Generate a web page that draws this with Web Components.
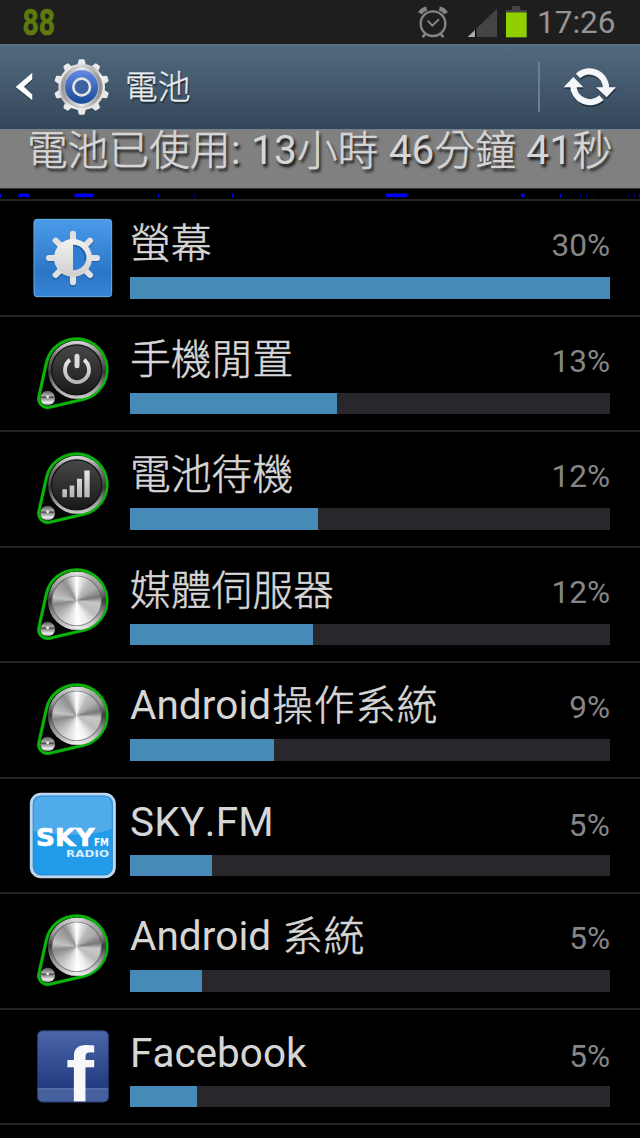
<!DOCTYPE html>
<html lang="zh-Hant">
<head>
<meta charset="utf-8">
<title>電池</title>
<style>
    body {
        margin: 0;
        width: 640px;
        height: 1138px;
        overflow: hidden;
        background: #000;
        color: #d6d6d6;
        font-family: Roboto, "Noto Sans CJK TC", sans-serif;
    }
</style>
</head>
<body>
<battery-screen></battery-screen>

<script>
const define = (name, html, setup) => {
    const template = document.createElement('template');
    template.innerHTML = html;
    customElements.define(name, class extends HTMLElement {
        constructor() {
            super();
            this.attachShadow({mode: 'open'}).append(template.content.cloneNode(true));
        }

        connectedCallback() {
            if (setup) setup(this, this.shadowRoot);
        }
    });
};

// Status bar
define('status-bar', `
<style>
    :host {
        display: flex;
        align-items: flex-start;
        height: 44px;
        background: #1e1e1e;
    }
    svg { display: block; }
    .icons { margin-left: auto; }
    .clock {
        width: 103px;
        box-sizing: border-box;
        font-size: 31.5px;
        line-height: 45px;
        color: #959595;
    }
</style>
<svg width="80" height="44">
    <text x="22.5" y="35.3" font-family="Roboto" font-weight="700" font-size="36.5" fill="#5f7a0c" stroke="#5f7a0c" stroke-width=".7" textLength="32.5" lengthAdjust="spacingAndGlyphs">88</text>
</svg>
<svg class="icons" width="137" height="44" viewBox="0 0 411 132">
    <g fill="none" stroke="#858585" stroke-width="7">
        <circle cx="99" cy="71" r="37"/>
        <path d="M83 62l14 15 20-19" stroke-width="6"/>
        <path d="M76 101l-8 11M122 101l8 11" stroke-width="8"/>
        <path d="M60 40Q66 29 80 26M138 40Q132 29 118 26" stroke-width="13"/>
    </g>
    <path d="M203 111L291 26V111z" fill="#444"/>
    <path d="M203 111L225 90V111z" fill="#aaa"/>
    <path d="M225 89l4-3v25h-4z" fill="#000"/>
    <path d="M336 18h25v12h19v7h-62v-7h18z" fill="#444"/>
    <path d="M318 37h62v75h-62z" fill="#90d000"/>
</svg>
<div class="clock"><slot></slot></div>
`);

// Title bar with back chevron, settings gear and refresh
define('action-bar', `
<style>
    :host {
        display: flex;
        height: 85px;
        border-top: 1px solid #5d7283;
        box-sizing: border-box;
        background: linear-gradient(#526a7f, #34475a);
    }
    svg { display: block; margin-top: -1px; }
    .title {
        flex: 1;
        padding: 3px 0 0 5px;
        font-size: 32.7px;
        font-weight: 300;
        -webkit-text-stroke: .4px;
        line-height: 80px;
        color: #e8ecef;
        text-shadow: 1px 2px 1px #1c2731;
    }
    .divider {
        width: 2px;
        margin: 17px 0;
        background: #6b7f8f;
    }
</style>
<svg width="120" height="84" viewBox="0 132 360 252">
    <defs>
        <linearGradient id="blue" x2="0" y2="1"><stop stop-color="#6289e4"/><stop offset="1" stop-color="#174a97"/></linearGradient>
        <linearGradient id="silver" x2="1" y2="1"><stop stop-color="#f7f7f7"/><stop offset=".25" stop-color="#dedede"/><stop offset=".42" stop-color="#b9b9b9"/><stop offset=".6" stop-color="#f2f2f2"/><stop offset="1" stop-color="#d8d8d8"/></linearGradient>
        <linearGradient id="rim" x2="1"><stop stop-color="#999"/><stop offset=".5" stop-color="#eee"/><stop offset="1" stop-color="#8c8c8c"/></linearGradient>
    </defs>
    <path d="M98 221v19L73 263l25 24v17L48 264z" fill="#1d2833"/>
    <path d="M97 218v20L72 260l25 24v17L47 261z" fill="#fff"/>
    <g id="teeth" fill="#e9e9e9"></g>
    <circle cx="245" cy="261" r="70" fill="url(#silver)"/>
    <circle cx="245" cy="261" r="57" fill="none" stroke="url(#rim)" stroke-width="12"/>
    <circle cx="245" cy="261" r="61" fill="none" stroke="#aaa" stroke-width="2"/>
    <circle cx="245" cy="261" r="50" fill="url(#blue)"/>
    <circle cx="245" cy="261" r="25" fill="#3c62a5" stroke="#e3e3e3" stroke-width="8"/>
</svg>
<div class="title"><slot></slot></div>
<div class="divider"></div>
<svg width="100" height="84" viewBox="420 132 300 252">
    <g transform="translate(2 5)" fill="#1f2b36" stroke="#1f2b36" opacity=".8">
        <path d="M534 228A50 50 0 0 1 618 268M604 293A50 50 0 0 1 520 256" fill="none" stroke-width="19"/>
        <path d="M588 262h60l-28 30zM491 262h59l-30-31z" stroke="none"/>
    </g>
    <path d="M534 228A50 50 0 0 1 618 268M604 293A50 50 0 0 1 520 256" fill="none" stroke="#f5f7fa" stroke-width="19"/>
    <path d="M588 262h60l-28 30zM491 262h59l-30-31z" fill="#f5f7fa"/>
</svg>
`, (host, root) => {
    let teeth = '';
    for (let i = 0; i < 10; i++) {
        teeth += `<path d="M231 200L236 180Q237 178 240 178h10Q253 178 254 180L259 200z" transform="rotate(${i * 36} 245 261)"/>`;
    }
    root.querySelector('#teeth').innerHTML = teeth;
});

define('usage-summary', `
<style>
    :host {
        display: block;
        height: 59px;
        box-sizing: border-box;
        border-top: 1px solid #6f7f8b;
        background: #808080;
        text-align: center;
        white-space: nowrap;
        font-size: 40.6px;
        letter-spacing: .17px;
        line-height: 40px;
        text-shadow: 2px 3px 3px #111;
    }
    ::slotted(span) { font-weight: 300; -webkit-text-stroke: .6px; vertical-align: -1px; line-height: 1; }
</style>
<slot></slot>
`);

// Thin strip of awake periods
define('awake-strip', `
<style>
    :host {
        display: block;
        height: 13px;
        box-sizing: border-box;
        border-top: 1px solid #333;
        border-bottom: 2px solid #242424;
    }
    svg { display: block; }
</style>
<svg width="640" height="10"><g id="marks"></g></svg>
`, (host, root) => {
    const marks = [
        [0, 1], [18.5, 11], [74.5, 19], [158, 1], [194, 1.5, 1], [232, 1.2], [386, 21.5],
        [521, 3.5], [560, 1], [580, 1, 1], [586, 1, 1], [593, 1, 1], [627, 1.5, 1], [634, 1.5, 1], [639, 1]
    ];
    root.querySelector('#marks').innerHTML = marks.map(([x, w, dim]) =>
        `<rect x="${x}" y="4.6" width="${w}" height="3.6" fill="${dim ? '#000087' : '#00f'}"/>`).join('');
});

// Icons are drawn at three units per pixel
const knob = face => `
    <defs>
        <linearGradient id="ring" x2="0" y2="1"><stop stop-color="#ddd"/><stop offset=".25" stop-color="#777"/><stop offset=".55" stop-color="#383838"/><stop offset=".8" stop-color="#999"/><stop offset="1" stop-color="#ccc"/></linearGradient>
        <linearGradient id="dark" x2="0" y2="1"><stop stop-color="#484848"/><stop offset="1" stop-color="#181818"/></linearGradient>
        <linearGradient id="ball" x2="0" y2="1"><stop stop-color="#555"/><stop offset=".3" stop-color="#aaa"/><stop offset=".45" stop-color="#777"/><stop offset=".8" stop-color="#eee"/><stop offset="1" stop-color="#777"/></linearGradient>
        <linearGradient id="glyph" x2="0" y2="1"><stop stop-color="#e8e8e8"/><stop offset="1" stop-color="#b5b5b5"/></linearGradient>
    </defs>
    <path d="M79 113A92 92 0 1 1 192 221L90 245A27 27 0 0 1 57 212z" fill="#050505" stroke="#0a3d0a" stroke-width="11" stroke-linejoin="round"/>
    <path d="M79 113A92 92 0 1 1 192 221L90 245A27 27 0 0 1 57 212z" fill="none" stroke="#08b508" stroke-width="8.5" stroke-linejoin="round"/>
    <circle cx="83" cy="218" r="22" fill="url(#ball)"/>
    <path d="M65 215h13M88 215h13" stroke="#444" stroke-width="3"/>
    <circle cx="83" cy="214" r="4" fill="#eee"/>
    <circle cx="171" cy="133" r="87" fill="url(#ring)"/>
    ${face}`;

const dark = '<circle cx="170" cy="133" r="75" fill="url(#dark)" stroke="#141414" stroke-width="4"/>';

const icons = {
    display: [4, `
        <defs>
            <linearGradient id="sky" x2="0" y2="1"><stop stop-color="#4b9ae9"/><stop offset=".7" stop-color="#2a76c6"/><stop offset="1" stop-color="#3785d7"/></linearGradient>
            <linearGradient id="sun" x2="0" y2="1"><stop stop-color="#f2f2f2"/><stop offset="1" stop-color="#cfcfcf"/></linearGradient>
        </defs>
        <rect x="42" y="43" width="233" height="232" rx="9" fill="url(#sky)" stroke="#6db0ea" stroke-width="3"/>
        <g transform="translate(0 5)" opacity=".4"><circle cx="159" cy="158" r="56" fill="#123d70"/>
            <path d="M159 84v148M87 158h144M107 106l104 104M211 106L107 210" stroke="#123d70" stroke-width="18" stroke-linecap="round"/></g>
        <path d="M159 86v146M87 159h144M107 107l103 103M210 107L107 210" stroke="#e1e1e1" stroke-width="18" stroke-linecap="round"/>
        <circle cx="159" cy="159" r="57" fill="url(#sun)"/>
        <path d="M159 119a40 38 0 0 1 0 77z" fill="#2f7ed1"/>
        <path d="M159 121a40 38 0 0 1 36 45" fill="none" stroke="#205c9f" stroke-width="4"/>`],
    power: [8.5, knob(dark + `
        <path d="M150 103A36 37 0 1 0 192 103" fill="none" stroke="url(#glyph)" stroke-width="11.5"/>
        <path d="M171 92v29" stroke="#ddd" stroke-width="15" stroke-linecap="round"/>`)],
    signal: [8.5, knob(dark + `
        <path d="M127 146h14v24h-14zM149 135h14v35h-14zM171 115h15v55h-15zM193 90h16v80h-16z" fill="url(#glyph)"/>`)],
    metal: [8.5, knob(`
        <foreignObject x="84" y="46" width="174" height="174">
            <div style="height:174px;border-radius:50%;background:conic-gradient(#ddd,#aaa 35deg,#999 60deg,#3c3c3c 88deg,#888 115deg,#ccc 145deg,#eee 180deg,#bbb 215deg,#888 245deg,#3c3c3c 272deg,#999 300deg,#bbb 330deg,#ddd)"></div>
        </foreignObject>
        <foreignObject x="94" y="57" width="152" height="152">
            <div style="height:152px;box-sizing:border-box;border:3px solid rgba(70,70,70,.6);border-radius:50%;background:conic-gradient(#fff,#bbb 32deg,#aaa 55deg,#777 80deg,#c8c8c8 95deg,#bbb 125deg,#eee 155deg,#fff 178deg,#d5d5d5 210deg,#aaa 240deg,#888 262deg,#c4c4c4 278deg,#a5a5a5 305deg,#909090 328deg,#fff)"></div>
        </foreignObject>`)],
    skyfm: [1.5, `
        <rect x="34" y="41" width="249" height="248" rx="29" fill="#229be8" stroke="#bfd6ee" stroke-width="9"/>
        <path d="M39 152V68Q39 46 61 46h195q22 0 22 22v77Q230 165 150 162Q80 161 39 152z" fill="#50abea"/>
        <rect x="40" y="47" width="237" height="236" rx="24" fill="none" stroke="#2c85ca" stroke-width="4" opacity=".6"/>
        <g font-family="DejaVu Sans" font-weight="700" fill="#fff">
            <text x="48" y="197" font-size="74" stroke="#fff" stroke-width="2" textLength="176" lengthAdjust="spacingAndGlyphs">SKY</text>
            <text x="222" y="196" font-size="29" textLength="45" lengthAdjust="spacingAndGlyphs">FM</text>
            <text x="138" y="229" font-size="25" fill="#d8eefc" textLength="130" lengthAdjust="spacingAndGlyphs">RADIO</text>
        </g>`],
    facebook: [.5, `
        <defs>
            <linearGradient id="navy" x2="0" y2="1"><stop stop-color="#4a66a8"/><stop offset=".8" stop-color="#233b80"/></linearGradient>
        </defs>
        <rect x="52" y="60" width="214" height="215" rx="16" fill="url(#navy)"/>
        <path d="M52 234h214v25q0 16-16 16H68q-16 0-16-16z" fill="#45609c"/>
        <path d="M52 235h214" stroke="#6880b1" stroke-width="3"/>
        <text x="138" y="275" font-family="Liberation Sans" font-weight="700" font-size="236" fill="#f7f7f9" textLength="84" lengthAdjust="spacingAndGlyphs">f</text>
        <rect x="53" y="61" width="212" height="213" rx="15" fill="none" stroke="#1f3568" stroke-width="2"/>`]
};

define('usage-row', `
<style>
    :host {
        display: flex;
        height: 115.5px;
        box-sizing: border-box;
        border-bottom: 2px solid #242424;
    }
    svg { flex: none; display: block; overflow: visible; }
    .content { width: 480px; }
    .head {
        display: flex;
        justify-content: space-between;
        align-items: flex-start;
        height: 76px;
        box-sizing: border-box;
        padding-top: 18px;
        white-space: nowrap;
        line-height: 48px;
    }
    .name { font-size: 40.5px; font-kerning: none; }
    ::slotted(span) { font-size: 40.8px; font-weight: 300; -webkit-text-stroke: .5px; vertical-align: -1px; line-height: 1; }
    .percent {
        padding-top: 3px;
        font-size: 31.5px;
        color: #868686;
    }
    :host([latin]) .name { padding-top: 1px; }
    :host([latin]) .percent { padding-top: 5px; }
    .track { height: 21.5px; background: #29262c; }
    .fill { height: 100%; background: #468ab8; }
</style>
<svg width="130" height="113" viewBox="0 0 390 339"></svg>
<div class="content">
    <div class="head">
        <div class="name"><slot></slot></div>
        <div class="percent"></div>
    </div>
    <div class="track"><div class="fill"></div></div>
</div>
`, (host, root) => {
    const [dy, art] = icons[host.getAttribute('icon')];
    root.querySelector('svg').innerHTML = `<g transform="translate(60 ${dy * 3})">${art}</g>`;
    root.querySelector('.percent').textContent = host.getAttribute('percent');
    root.querySelector('.fill').style.width = host.getAttribute('fill') + 'px';
});

define('battery-screen', `
<style>
    :host { display: flex; flex-direction: column; }
    .wide { letter-spacing: .7px; margin-left: 1px; }
    .spaced { letter-spacing: .3px; }
</style>
<status-bar>17:26</status-bar>
<action-bar>電池</action-bar>
<usage-summary><span>電池已使用</span>: 13<span>小時</span> 46<span>分鐘</span> 41<span>秒</span></usage-summary>
<awake-strip></awake-strip>
<usage-row icon="display" percent="30%" fill="480"><span>螢幕</span></usage-row>
<usage-row icon="power" percent="13%" fill="207"><span>手機閒置</span></usage-row>
<usage-row icon="signal" percent="12%" fill="187.5"><span>電池待機</span></usage-row>
<usage-row icon="metal" percent="12%" fill="183"><span>媒體伺服器</span></usage-row>
<usage-row icon="metal" percent="9%" fill="144">Android<span class="wide">操作系統</span></usage-row>
<usage-row class="spaced" icon="skyfm" percent="5%" fill="81.7" latin>SKY.FM</usage-row>
<usage-row icon="metal" percent="5%" fill="72">Android <span class="wide">系統</span></usage-row>
<usage-row icon="facebook" percent="5%" fill="67.3" latin>Facebook</usage-row>
`);
</script>
</body>
</html>
